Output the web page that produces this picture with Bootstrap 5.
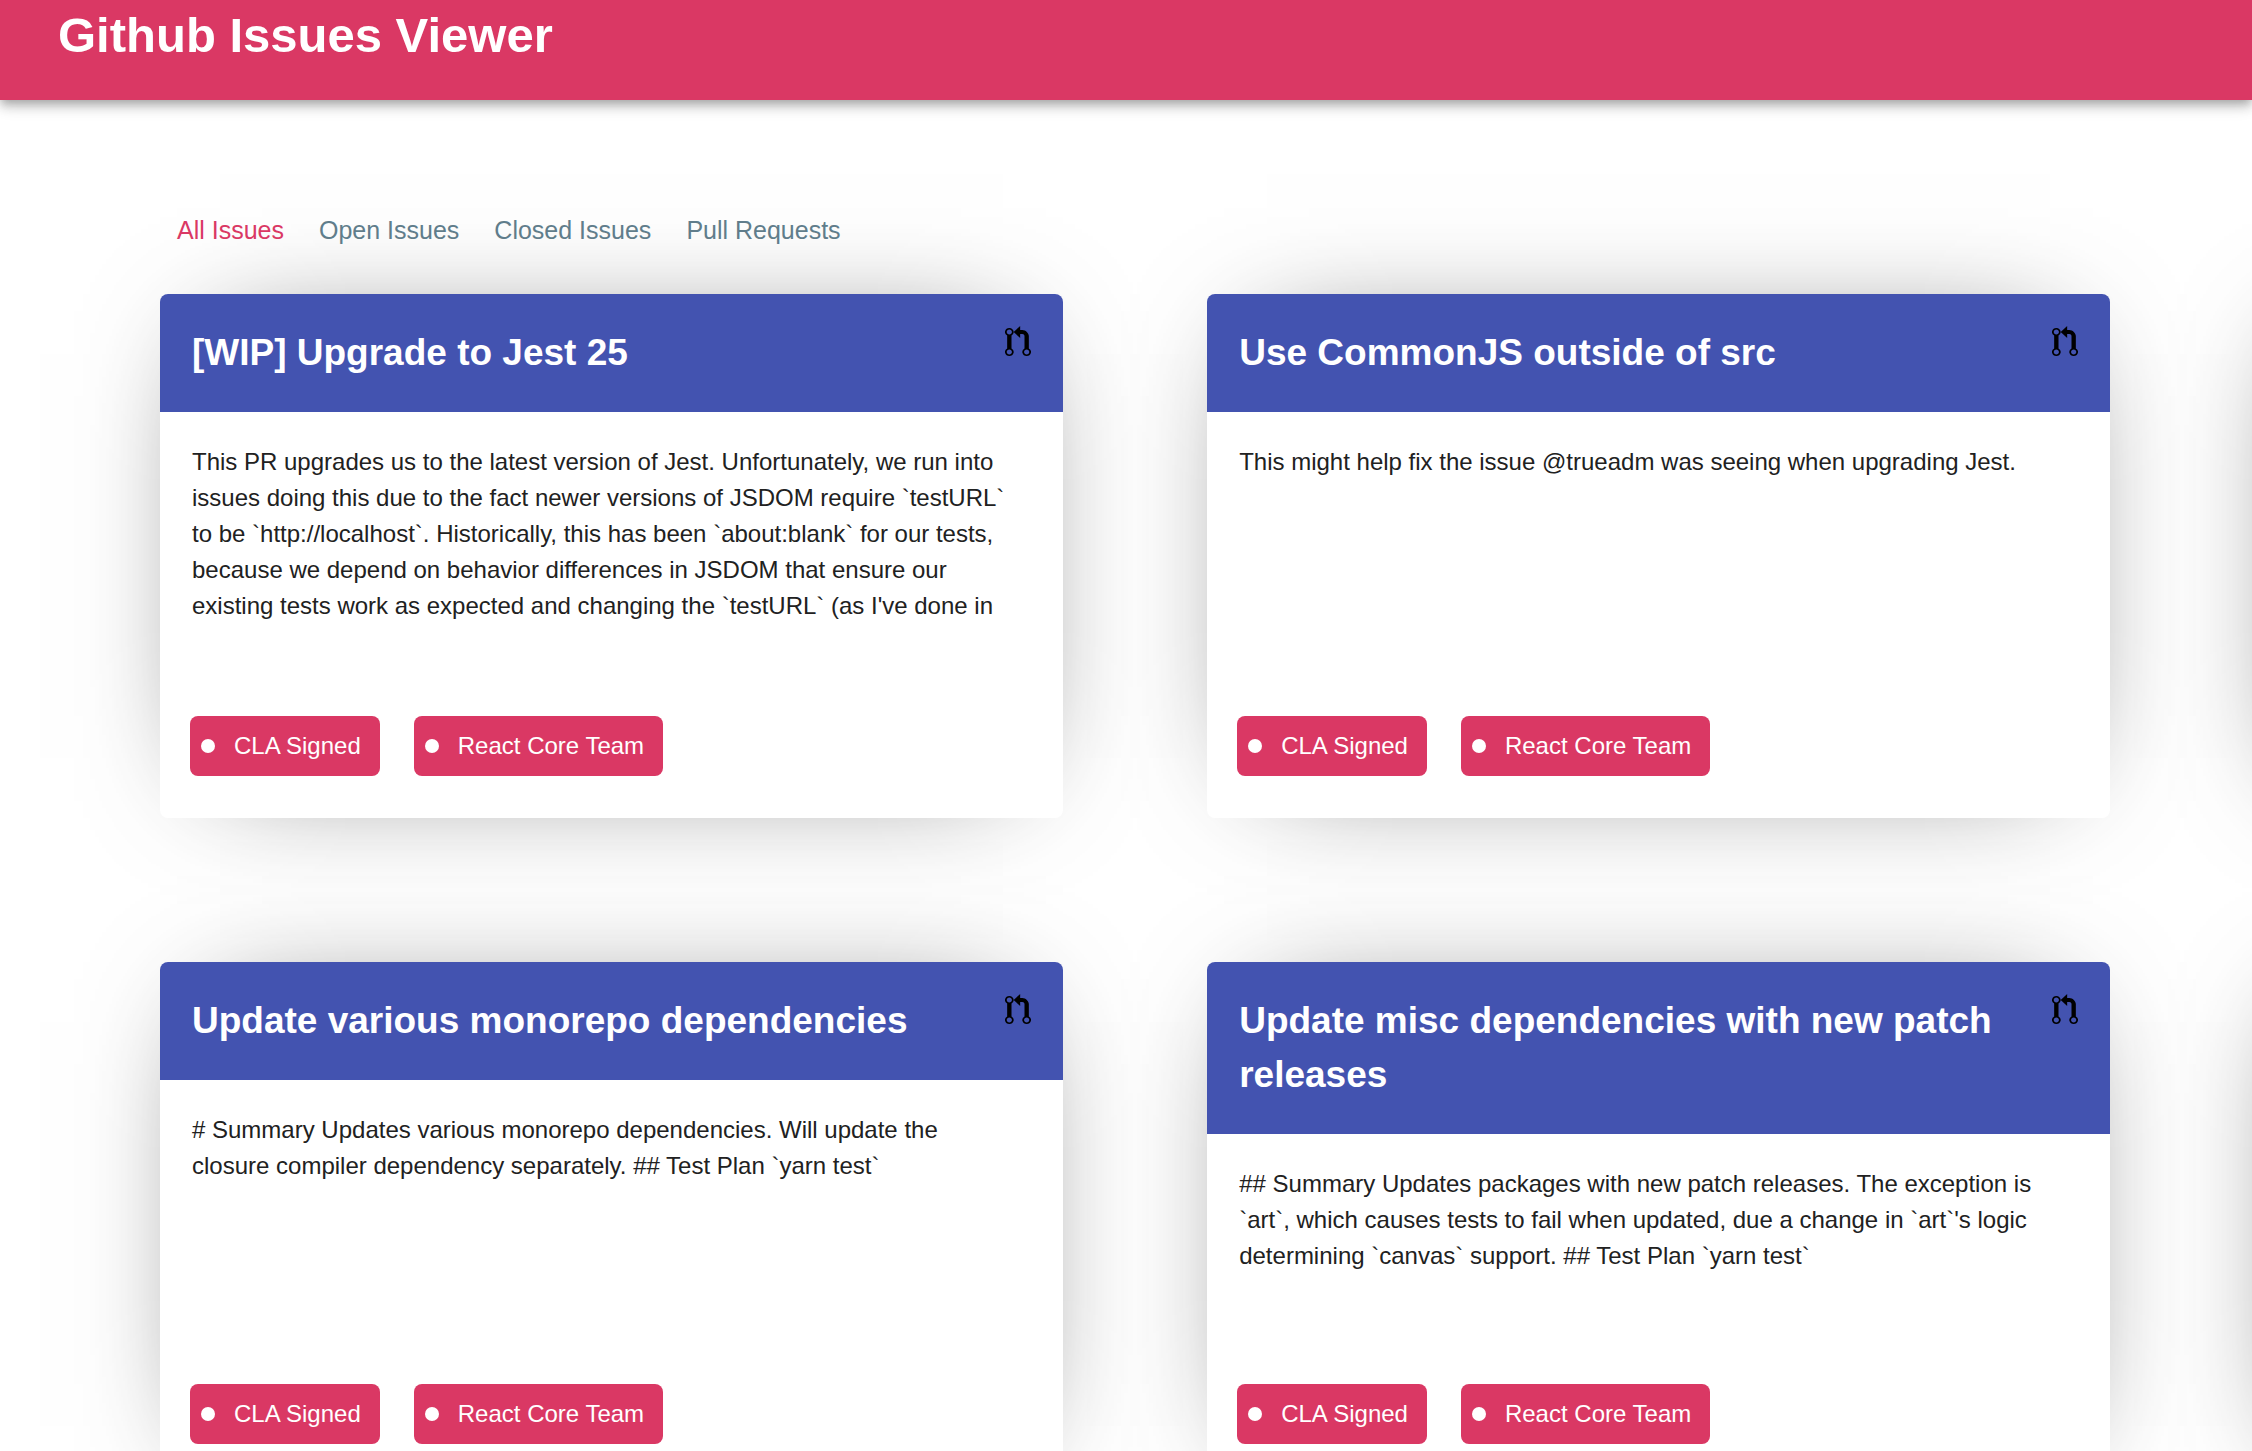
<!DOCTYPE html>
<html lang="en">
<head>
<meta charset="utf-8">
<meta name="viewport" content="width=device-width, initial-scale=1">
<title>Github Issues Viewer</title>
<link href="https://cdn.jsdelivr.net/npm/bootstrap@5.3.0/dist/css/bootstrap.min.css" rel="stylesheet">
<style>
  :root { --pink: #da3864; --indigo: #4353b0; }
  body { font-family: "Liberation Sans", Arial, sans-serif; font-size: 24px; line-height: 36px; color: #212121; overflow-x: hidden; }
  .app-header {
    background: var(--pink); height: 100px; padding: 0 58px;
    box-shadow: 0 4px 8px -2px rgba(0,0,0,.2), 0 8px 10px 0 rgba(0,0,0,.14), 0 2px 20px 0 rgba(0,0,0,.12);
  }
  .app-header h1 { font-size: 49px; line-height: 70px; font-weight: 700; }
  .filter-nav { padding: 112px 177px 0; gap: 35px; }
  .filter-nav .nav-link { padding: 0; font-size: 25px; line-height: 36px; color: #607d8b; }
  .filter-nav .nav-link.active { color: var(--pink); }
  .board { padding-left: 88px; padding-top: 46px; }
  .board-row { gap: 144px 0; margin-bottom: 144px; }
  .issue-col { flex: 0 0 46.5vw; padding: 0 72px; }
  .issue-card { min-height: 524px; border: 0; border-radius: 8px; box-shadow: 0 0 120px -60px rgba(0,0,0,.75); color: inherit; }
  .issue-head { background: var(--indigo); color: #fff; padding: 32px; min-height: 118px; border-radius: 8px 8px 0 0; }
  .issue-head h2 { font-size: 37px; line-height: 54px; font-weight: 700; }
  .issue-head svg { width: 26px; height: 32px; }
  .issue-body { padding: 32px 48px 0 32px; }
  .issue-foot { padding: 0 30px 42px; gap: 34px; }
  .label-chip { background: var(--pink); color: #fff; height: 60px; padding: 0 19px 0 11px; border-radius: 8px; }
  .label-chip::before { content: ""; width: 14px; height: 14px; border-radius: 50%; background: #fff; margin-right: 19px; }
</style>
</head>
<body>
<svg class="d-none" aria-hidden="true">
  <symbol id="pull" viewBox="0 0 12 16" preserveAspectRatio="none">
    <path d="M11 11.28V5c-.03-.78-.34-1.47-.94-2.06C9.46 2.35 8.78 2.03 8 2H7V0L4 3l3 3V4h1c.27.02.48.11.69.31.21.2.3.42.31.69v6.28A1.993 1.993 0 0 0 10 15a1.993 1.993 0 0 0 1-3.72zm-1 2.92c-.66 0-1.2-.55-1.2-1.2 0-.65.55-1.2 1.2-1.2.65 0 1.2.55 1.2 1.2 0 .65-.55 1.2-1.2 1.2zM4 3c0-1.11-.89-2-2-2a1.993 1.993 0 0 0-1 3.72v6.56A1.993 1.993 0 0 0 2 15a1.993 1.993 0 0 0 1-3.72V4.72c.59-.34 1-.98 1-1.72zm-.8 10c0 .66-.55 1.2-1.2 1.2-.65 0-1.2-.55-1.2-1.2 0-.65.55-1.2 1.2-1.2.65 0 1.2.55 1.2 1.2zM2 4.2C1.34 4.2.8 3.65.8 3c0-.65.55-1.2 1.2-1.2.65 0 1.2.55 1.2 1.2 0 .65-.55 1.2-1.2 1.2z"/>
  </symbol>
</svg>
<header class="app-header position-relative text-white">
  <h1 class="mb-0">Github Issues Viewer</h1>
</header>
<nav class="nav filter-nav position-relative z-1" aria-label="Issue filters">
  <a class="nav-link active" aria-current="page" href="#all">All Issues</a>
  <a class="nav-link" href="#open">Open Issues</a>
  <a class="nav-link" href="#closed">Closed Issues</a>
  <a class="nav-link" href="#pulls">Pull Requests</a>
</nav>
<main class="board">
  <div class="board-row d-flex flex-nowrap">
    <div class="issue-col">
      <article class="card issue-card">
        <div class="issue-head d-flex justify-content-between align-items-start gap-4">
          <h2 class="mb-0">[WIP] Upgrade to Jest 25</h2>
          <svg class="flex-shrink-0" aria-hidden="true"><use href="#pull"/></svg>
        </div>
        <p class="issue-body flex-grow-1 mb-0">This PR upgrades us to the latest version of Jest. Unfortunately, we run into issues doing this due to the fact newer versions of JSDOM require `testURL` to be `http://localhost`. Historically, this has been `about:blank` for our tests, because we depend on behavior differences in JSDOM that ensure our existing tests work as expected and changing the `testURL` (as I've done in</p>
        <div class="issue-foot d-flex">
          <span class="label-chip d-flex align-items-center">CLA Signed</span>
          <span class="label-chip d-flex align-items-center">React Core Team</span>
        </div>
      </article>
    </div>
    <div class="issue-col">
      <article class="card issue-card">
        <div class="issue-head d-flex justify-content-between align-items-start gap-4">
          <h2 class="mb-0">Use CommonJS outside of src</h2>
          <svg class="flex-shrink-0" aria-hidden="true"><use href="#pull"/></svg>
        </div>
        <p class="issue-body flex-grow-1 mb-0">This might help fix the issue @trueadm was seeing when upgrading Jest.</p>
        <div class="issue-foot d-flex">
          <span class="label-chip d-flex align-items-center">CLA Signed</span>
          <span class="label-chip d-flex align-items-center">React Core Team</span>
        </div>
      </article>
    </div>
    <div class="issue-col">
      <article class="card issue-card"><div class="issue-head"></div></article>
    </div>
  </div>
  <div class="board-row d-flex flex-nowrap">
    <div class="issue-col">
      <article class="card issue-card">
        <div class="issue-head d-flex justify-content-between align-items-start gap-4">
          <h2 class="mb-0">Update various monorepo dependencies</h2>
          <svg class="flex-shrink-0" aria-hidden="true"><use href="#pull"/></svg>
        </div>
        <p class="issue-body flex-grow-1 mb-0"># Summary Updates various monorepo dependencies. Will update the closure compiler dependency separately. ## Test Plan `yarn test`</p>
        <div class="issue-foot d-flex">
          <span class="label-chip d-flex align-items-center">CLA Signed</span>
          <span class="label-chip d-flex align-items-center">React Core Team</span>
        </div>
      </article>
    </div>
    <div class="issue-col">
      <article class="card issue-card">
        <div class="issue-head d-flex justify-content-between align-items-start gap-4">
          <h2 class="mb-0">Update misc dependencies with new patch releases</h2>
          <svg class="flex-shrink-0" aria-hidden="true"><use href="#pull"/></svg>
        </div>
        <p class="issue-body flex-grow-1 mb-0">## Summary Updates packages with new patch releases. The exception is `art`, which causes tests to fail when updated, due a change in `art`'s logic determining `canvas` support. ## Test Plan `yarn test`</p>
        <div class="issue-foot d-flex">
          <span class="label-chip d-flex align-items-center">CLA Signed</span>
          <span class="label-chip d-flex align-items-center">React Core Team</span>
        </div>
      </article>
    </div>
    <div class="issue-col">
      <article class="card issue-card"><div class="issue-head"></div></article>
    </div>
  </div>
</main>
<script src="https://cdn.jsdelivr.net/npm/bootstrap@5.3.0/dist/js/bootstrap.bundle.min.js"></script>
</body>
</html>
